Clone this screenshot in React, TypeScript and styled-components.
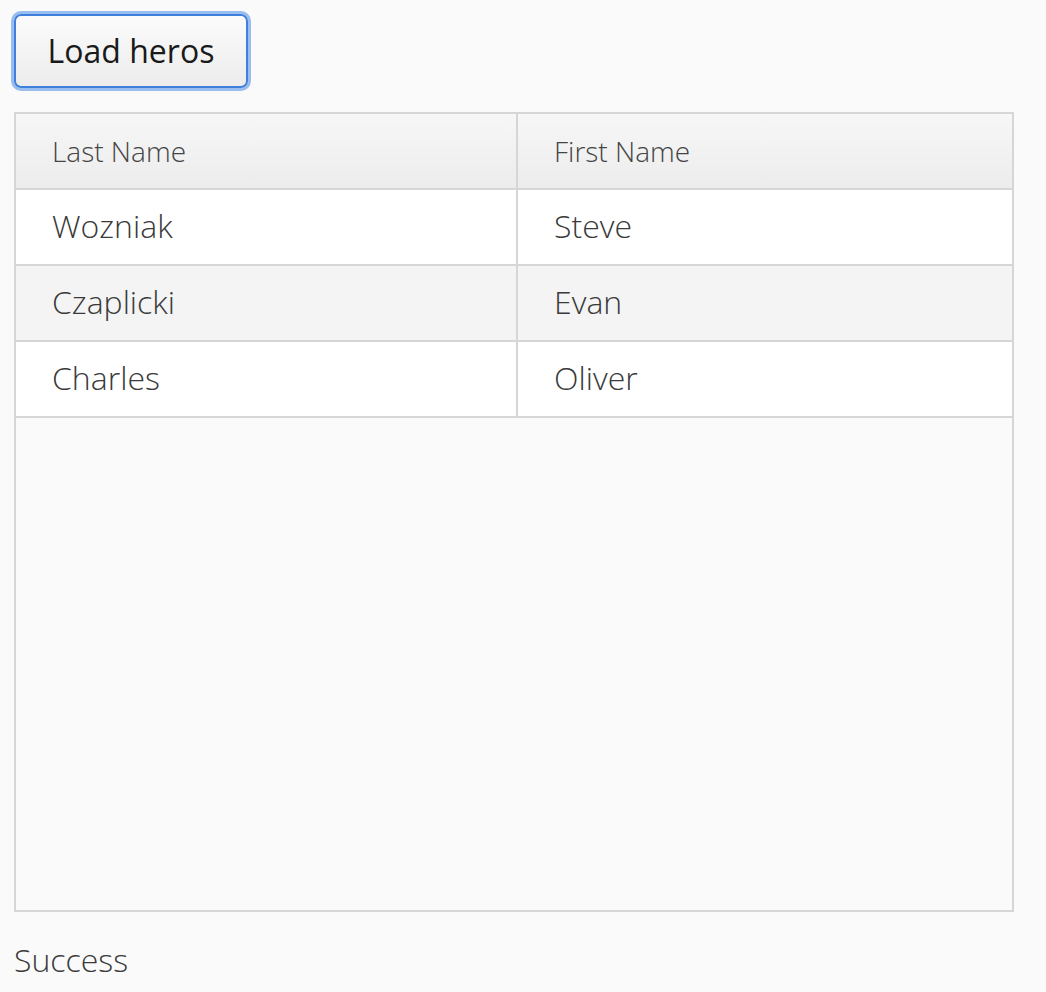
import React from "react";
import styled, { createGlobalStyle } from "styled-components";

const GlobalStyle = createGlobalStyle`
  html, body { margin: 0; padding: 0; background: #fafafa; }
  body { font-family: "Open Sans", "Noto Sans", sans-serif; color: #333; }
`;

const Page = styled.div`
  padding: 14px 0 0 14px;
  width: 1000px;
`;

const LoadButton = styled.button`
  box-sizing: border-box;
  width: 234px;
  height: 74px;
  margin: 0;
  padding: 0 0 2px;
  border: 2px solid #3f80dc;
  border-radius: 7px;
  box-shadow: 0 0 0 3px #98bdee;
  background: linear-gradient(#fbfbfb, #ececec);
  font-family: "Open Sans", sans-serif;
  font-size: 32px;
  font-weight: 400;
  color: #1a1a1a;
  outline: none;
`;

const Grid = styled.div`
  box-sizing: border-box;
  margin-top: 24px;
  width: 1000px;
  height: 800px;
  border: 2px solid #d6d6d6;
  background: #fafafa;
`;

const Row = styled.div<{ $variant: "head" | "odd" | "even" }>`
  display: grid;
  grid-template-columns: 502px 1fr;
  height: 76px;
  box-sizing: border-box;
  border-bottom: 2px solid #d6d6d6;
  background: ${(p) =>
    p.$variant === "head"
      ? "linear-gradient(#f7f7f7, #ececec)"
      : p.$variant === "even"
      ? "#f4f4f4"
      : "#ffffff"};
`;

const Cell = styled.div<{ $head?: boolean }>`
  display: flex;
  align-items: center;
  padding-left: 36px;
  padding-bottom: ${(p) => (p.$head ? "0" : "4px")};
  font-weight: 300;
  font-size: ${(p) => (p.$head ? "28px" : "32px")};
  color: ${(p) => (p.$head ? "#444" : "#3a3a3a")};
  &:first-child {
    border-right: 2px solid #d6d6d6;
  }
`;

const Status = styled.div`
  margin-top: 26px;
  margin-left: 0;
  font-weight: 300;
  font-size: 32px;
  color: #3a3a3a;
`;

const heroes = [
  ["Wozniak", "Steve"],
  ["Czaplicki", "Evan"],
  ["Charles", "Oliver"],
];

export default function App() {
  return (
    <>
      <GlobalStyle />
      <Page>
        <LoadButton>Load heros</LoadButton>
        <Grid>
          <Row $variant="head">
            <Cell $head>Last Name</Cell>
            <Cell $head>First Name</Cell>
          </Row>
          {heroes.map(([last, first], i) => (
            <Row key={last} $variant={i % 2 === 1 ? "even" : "odd"}>
              <Cell>{last}</Cell>
              <Cell>{first}</Cell>
            </Row>
          ))}
        </Grid>
        <Status>Success</Status>
      </Page>
    </>
  );
}
